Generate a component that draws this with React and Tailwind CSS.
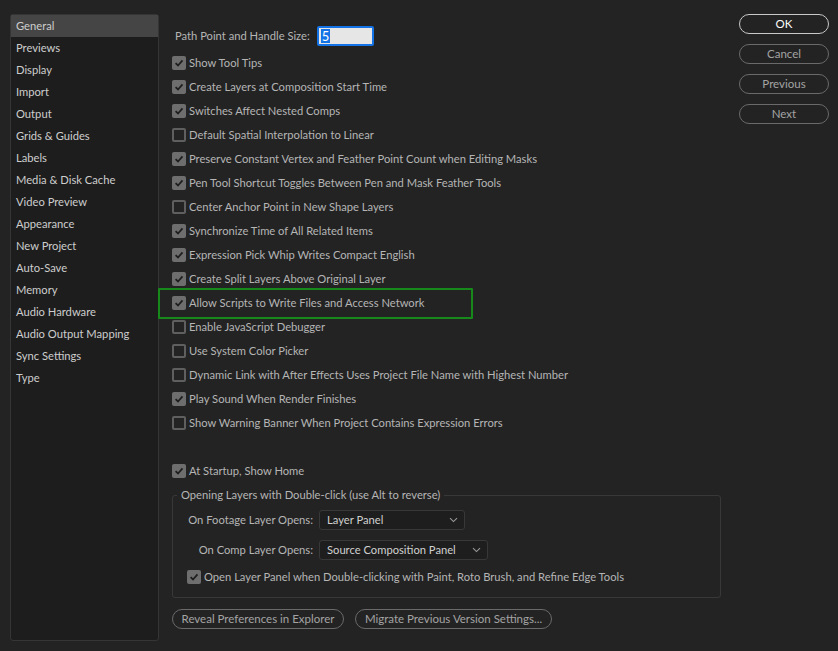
import React, { useState } from "react";

const sections = [
  "General",
  "Previews",
  "Display",
  "Import",
  "Output",
  "Grids & Guides",
  "Labels",
  "Media & Disk Cache",
  "Video Preview",
  "Appearance",
  "New Project",
  "Auto-Save",
  "Memory",
  "Audio Hardware",
  "Audio Output Mapping",
  "Sync Settings",
  "Type",
];

const options = [
  { label: "Show Tool Tips", on: true },
  { label: "Create Layers at Composition Start Time", on: true },
  { label: "Switches Affect Nested Comps", on: true },
  { label: "Default Spatial Interpolation to Linear", on: false },
  { label: "Preserve Constant Vertex and Feather Point Count when Editing Masks", on: true },
  { label: "Pen Tool Shortcut Toggles Between Pen and Mask Feather Tools", on: true },
  { label: "Center Anchor Point in New Shape Layers", on: false },
  { label: "Synchronize Time of All Related Items", on: true },
  { label: "Expression Pick Whip Writes Compact English", on: true },
  { label: "Create Split Layers Above Original Layer", on: true },
  { label: "Allow Scripts to Write Files and Access Network", on: true, mark: true },
  { label: "Enable JavaScript Debugger", on: false },
  { label: "Use System Color Picker", on: false },
  { label: "Dynamic Link with After Effects Uses Project File Name with Highest Number", on: false },
  { label: "Play Sound When Render Finishes", on: true },
  { label: "Show Warning Banner When Project Contains Expression Errors", on: false },
];

const Checkbox = ({ on }) =>
  on ? (
    <span className="w-[14px] h-[14px] rounded-[2px] bg-[#6e6e6e] flex items-center justify-center shrink-0">
      <svg width="10" height="10" viewBox="0 0 10 10">
        <path d="M1.6 5.2 L4 7.5 L8.5 2.4" fill="none" stroke="#1f1f1f" strokeWidth="1.8" />
      </svg>
    </span>
  ) : (
    <span className="w-[14px] h-[14px] rounded-[2px] border-2 border-[#5f5f5f] shrink-0" />
  );

const Chevron = () => (
  <svg width="9" height="6" viewBox="0 0 9 6" className="shrink-0">
    <path d="M1 1.2 L4.5 4.6 L8 1.2" fill="none" stroke="#9a9a9a" strokeWidth="1.1" />
  </svg>
);

const PillButton = ({ children, primary, className = "" }) => (
  <button
    className={`h-[20px] rounded-full border text-[11.5px] leading-none ${
      primary ? "border-[#c8c8c8] text-white" : "border-[#6a6a6a] text-[#a3a3a3]"
    } ${className}`}
  >
    {children}
  </button>
);

export default function App() {
  const [section, setSection] = useState("General");
  const [checks, setChecks] = useState(options.map((o) => o.on));

  return (
    <div
      className="w-[838px] h-[651px] bg-[#232323] flex text-[11.2px] text-[#b5b5b5] overflow-hidden"
      style={{ fontFamily: "Lato, 'Noto Sans', sans-serif" }}
    >
      <div className="ml-[10px] mt-[14px] w-[149px] h-[627px] bg-[#1d1d1d] border border-[#353535] rounded-[3px] shrink-0">
        {sections.map((s) => (
          <div
            key={s}
            onClick={() => setSection(s)}
            className={`h-[22px] flex items-center pl-[5px] text-[#cdcdcd] ${
              section === s ? "bg-[#454545]" : ""
            }`}
          >
            {s}
          </div>
        ))}
      </div>

      <div className="ml-[13px] w-[550px] shrink-0 pt-[26px]">
        <div className="h-[20px] flex items-center">
          <span className="ml-[3px]">Path Point and Handle Size:</span>
          <div className="ml-[7px] w-[57px] h-[20px] bg-[#e6e6e6] border-2 border-[#1473e6] rounded-[2px] flex items-center pl-[2px]">
            <span className="bg-[#1473e6] text-white leading-[14px] px-[1px] text-[13px]">5</span>
          </div>
        </div>

        <div className="mt-[5px]">
          {options.map((o, i) => (
            <div
              key={o.label}
              className="relative h-[24px] flex items-center gap-[3px]"
              onClick={() => setChecks(checks.map((c, j) => (j === i ? !c : c)))}
            >
              <Checkbox on={checks[i]} />
              <span className="whitespace-nowrap">{o.label}</span>
              {o.mark && (
                <span className="absolute -left-[14px] -top-[3px] w-[315px] h-[31px] border-2 border-[#16891a] rounded-[1px] pointer-events-none" />
              )}
            </div>
          ))}
        </div>

        <div className="mt-[24px] h-[24px] flex items-center gap-[3px]">
          <Checkbox on />
          <span>At Startup, Show Home</span>
        </div>

        <fieldset className="mt-[4px] border border-[#383838] rounded-[3px] w-[549px] h-[111px] px-0">
          <legend className="ml-[4px] px-[4px] leading-[16px]">
            Opening Layers with Double-click (use Alt to reverse)
          </legend>
          <div className="mt-[7px] flex items-center h-[20px]">
            <span className="w-[140px] text-right">On Footage Layer Opens:</span>
            <div className="ml-[6px] w-[146px] h-[20px] bg-[#1e1e1e] border border-[#383838] rounded-[3px] flex items-center justify-between pl-[7px] pr-[6px] text-[#d0d0d0]">
              <span>Layer Panel</span>
              <Chevron />
            </div>
          </div>
          <div className="mt-[10px] flex items-center h-[20px]">
            <span className="w-[140px] text-right">On Comp Layer Opens:</span>
            <div className="ml-[6px] w-[169px] h-[20px] bg-[#1e1e1e] border border-[#383838] rounded-[3px] flex items-center justify-between pl-[7px] pr-[6px] text-[#d0d0d0]">
              <span>Source Composition Panel</span>
              <Chevron />
            </div>
          </div>
          <div className="mt-[7px] ml-[14px] h-[20px] flex items-center gap-[3px]">
            <Checkbox on />
            <span className="whitespace-nowrap">
              Open Layer Panel when Double-clicking with Paint, Roto Brush, and Refine Edge Tools
            </span>
          </div>
        </fieldset>

        <div className="mt-[11px] flex gap-[11px]">
          <PillButton className="w-[172px]">Reveal Preferences in Explorer</PillButton>
          <PillButton className="w-[197px]">Migrate Previous Version Settings...</PillButton>
        </div>
      </div>

      <div className="ml-[17px] mt-[14px] w-[90px] flex flex-col gap-[10px]">
        <PillButton primary>OK</PillButton>
        <PillButton>Cancel</PillButton>
        <PillButton>Previous</PillButton>
        <PillButton>Next</PillButton>
      </div>
    </div>
  );
}
